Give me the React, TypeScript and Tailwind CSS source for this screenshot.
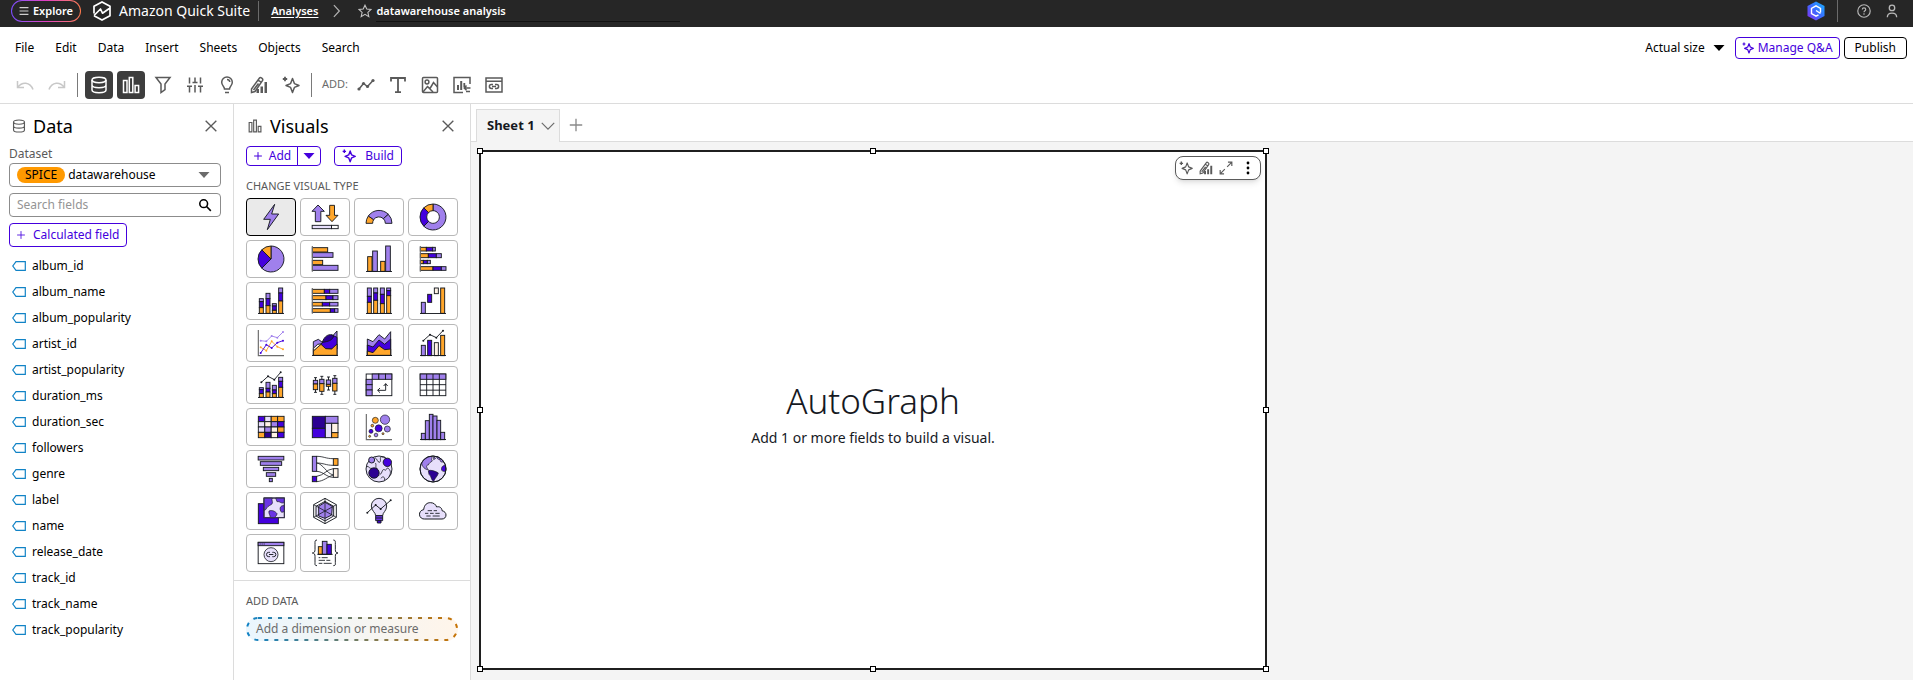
import type { ReactNode } from "react";

const P = "#a080ec";
const D = "#4400dd";
const K = "#2c0092";
const O = "#ffa62b";
const L = "#e7dffb";
const C = "#fff3e6";
const W = "#ffffff";
const INK = "#16191f";
const AXIS = "#6b6b6b";

type Bar = [number, number, number, number, string];

/* ---------- visual type glyphs, drawn on an 84 unit grid ---------- */

function Glyph({ children }: { children: ReactNode }) {
  return (
    <svg
      viewBox="0 0 84 84"
      className="size-7 shrink-0"
      fill="none"
      stroke={INK}
      strokeWidth="2.8"
      aria-hidden="true"
    >
      {children}
    </svg>
  );
}

function Bars({ items }: { items: Bar[] }) {
  return (
    <>
      {items.map(([x, y, w, h, c], i) => (
        <rect key={i} x={x} y={y} width={w} height={h} fill={c} />
      ))}
    </>
  );
}

function Stack({ x, w, stops, colors }: { x: number; w: number; stops: number[]; colors: string[] }) {
  return <Bars items={colors.map((c, i): Bar => [x, stops[i], w, stops[i + 1] - stops[i], c])} />;
}

function Row({ y, h, stops }: { y: number; h: number; stops: number[] }) {
  const colors = [O, D, P];
  return <Bars items={colors.map((c, i): Bar => [stops[i], y, stops[i + 1] - stops[i], h, c])} />;
}

function Trend({ pts, color }: { pts: [number, number][]; color: string }) {
  return (
    <g stroke={color}>
      <polyline points={pts.map((p) => p.join(",")).join(" ")} />
      {pts.map(([x, y]) => (
        <circle key={x} cx={x} cy={y} r="3" fill={color} stroke="none" />
      ))}
    </g>
  );
}

function BoxPlot({ x, t, a, m, b, e }: { x: number; t: number; a: number; m: number; b: number; e: number }) {
  return (
    <>
      <path d={`M${x + 6.5} ${t}V${e}M${x + 2} ${t}h9M${x + 2} ${e}h9`} />
      <Bars items={[[x, a, 13, m - a, P], [x, m, 13, b - m, O]]} />
    </>
  );
}

const baseline = <path d="M3 79.5H81" stroke={INK} />;
const heat = [
  [D, L, O, O],
  [L, C, P, D],
  [L, P, C, O],
  [O, K, C, D],
];

const visualTypes: { name: string; art: ReactNode }[] = [
  {
    name: "AutoGraph",
    art: <path d="M53 4L20 49H40L31 80L65 33H44Z" fill={P} strokeLinejoin="round" />,
  },
  {
    name: "KPI",
    art: (
      <>
        <path d="M21 6L40 25H29.5V56H13V25H3Z" fill={P} />
        <path d="M56 7H70.5V37H81L63 56L45 37H56Z" fill={O} />
        <Bars items={[[3.5, 67, 58, 10, L], [61.5, 67, 20, 10, W]]} />
      </>
    ),
  },
  {
    name: "Gauge",
    art: (
      <>
        <path d="M3 61A39 39 0 0 1 10 39L26 50A19 19 0 0 0 23 61Z" fill={O} />
        <path d="M10 39A39 39 0 0 1 70 34L55 47A19 19 0 0 0 26 50Z" fill={P} />
        <path d="M70 34A39 39 0 0 1 81 61H61A19 19 0 0 0 55 47Z" fill={P} />
      </>
    ),
  },
  {
    name: "Donut chart",
    art: (
      <>
        <path d="M42 3A39 39 0 1 1 14.4 69.6L28.6 55.4A19 19 0 1 0 42 23Z" fill={P} />
        <path d="M14.4 69.6A39 39 0 0 1 14.4 14.4L28.6 28.6A19 19 0 0 0 28.6 55.4Z" fill={D} />
        <path d="M14.4 14.4A39 39 0 0 1 42 3V23A19 19 0 0 0 28.6 28.6Z" fill={O} />
      </>
    ),
  },
  {
    name: "Pie chart",
    art: (
      <>
        <path d="M42 42V3A39 39 0 1 1 14.4 69.6Z" fill={P} />
        <path d="M42 42L14.4 69.6A39 39 0 0 1 14.4 14.4Z" fill={D} />
        <path d="M42 42L14.4 14.4A39 39 0 0 1 42 3Z" fill={O} />
      </>
    ),
  },
  {
    name: "Horizontal bar chart",
    art: (
      <>
        <Bars items={[[4, 8, 46, 13, O], [4, 23, 62, 14, P], [4, 46, 31, 13, O], [4, 61, 77, 15, P]]} />
        <path d="M4 3V80" stroke={AXIS} strokeWidth="3.5" />
      </>
    ),
  },
  {
    name: "Vertical bar chart",
    art: (
      <>
        <Bars items={[[8, 35, 13, 44, O], [23, 18, 14, 61, P], [47, 49, 13, 30, O], [62, 3, 14, 76, P]]} />
        {baseline}
      </>
    ),
  },
  {
    name: "Horizontal stacked bar chart",
    art: (
      <>
        <Row y={7} h={11} stops={[4, 22, 41, 49]} />
        <Row y={26} h={12} stops={[4, 28, 52, 67]} />
        <Row y={46} h={10} stops={[4, 13, 25, 34]} />
        <Row y={65} h={11} stops={[4, 42, 67, 81]} />
        <path d="M4 3V80" stroke={AXIS} strokeWidth="3.5" />
      </>
    ),
  },
  {
    name: "Vertical stacked bar chart",
    art: (
      <>
        <Stack x={7} w={12} stops={[35, 44, 62, 79]} colors={[P, D, O]} />
        <Stack x={27} w={12} stops={[19, 35, 56, 79]} colors={[P, D, O]} />
        <Stack x={46} w={12} stops={[50, 57, 70, 79]} colors={[P, D, O]} />
        <Stack x={65} w={12} stops={[3, 18, 42, 79]} colors={[P, D, O]} />
        {baseline}
      </>
    ),
  },
  {
    name: "Horizontal 100% stacked bar chart",
    art: (
      <>
        <Row y={7} h={12} stops={[4, 40, 56, 81]} />
        <Row y={26} h={12} stops={[4, 45, 66, 81]} />
        <Row y={46} h={11} stops={[4, 34, 56, 81]} />
        <Row y={65} h={11} stops={[4, 58, 71, 81]} />
        <path d="M4 3V80" stroke={AXIS} strokeWidth="3.5" />
      </>
    ),
  },
  {
    name: "Vertical 100% stacked bar chart",
    art: (
      <>
        <Stack x={7} w={12} stops={[3, 28, 46, 79]} colors={[P, D, O]} />
        <Stack x={26} w={12} stops={[3, 18, 40, 79]} colors={[P, D, O]} />
        <Stack x={46} w={12} stops={[3, 22, 50, 79]} colors={[P, D, O]} />
        <Stack x={65} w={12} stops={[3, 11, 26, 79]} colors={[P, D, O]} />
        {baseline}
      </>
    ),
  },
  {
    name: "Waterfall chart",
    art: (
      <>
        <Bars items={[[7, 46, 12, 33, P], [26, 22, 12, 24, D], [46, 3, 12, 17, C], [65, 3, 12, 76, O]]} />
        {baseline}
      </>
    ),
  },
  {
    name: "Line chart",
    art: (
      <>
        <path d="M4 3V80H81" stroke={AXIS} strokeWidth="3.5" />
        <Trend color={P} pts={[[11, 35], [28, 37], [44, 21], [61, 26], [78, 9]]} />
        <Trend color={O} pts={[[11, 55], [28, 65], [44, 37], [61, 53], [78, 61]]} />
        <Trend color={D} pts={[[11, 72], [28, 47], [44, 57], [61, 41], [78, 35]]} />
      </>
    ),
  },
  {
    name: "Area chart",
    art: (
      <>
        <path d="M7 38L22 31L34 40L62 24L78 6V79H7Z" fill={P} />
        <path d="M7 58L20 46L34 44L26 56L7 66Z" fill={C} />
        <path d="M30 46L44 28L62 18L78 25V60H30Z" fill={D} />
        <path d="M34 40C40 20 56 12 68 20C66 34 50 38 34 40Z" fill={K} />
        <path d="M7 66L30 46L44 59L62 60L78 45V79H7Z" fill={O} />
        {baseline}
      </>
    ),
  },
  {
    name: "Stacked area chart",
    art: (
      <>
        <path d="M7 30L24 38L42 17L59 30L77 8V79H7Z" fill={P} />
        <path d="M7 48L24 54L42 33L59 46L77 30V79H7Z" fill={D} />
        <path d="M7 66L24 71L42 50L59 62L77 60V79H7Z" fill={O} />
        {baseline}
      </>
    ),
  },
  {
    name: "Clustered bar combo chart",
    art: (
      <>
        <Bars items={[[7, 49, 12, 31, P], [26, 34, 12, 46, D], [46, 41, 12, 39, C], [65, 19, 12, 61, O]]} />
        {baseline}
        <Trend color={INK} pts={[[13, 35], [33, 17], [52, 26], [72, 5]]} />
      </>
    ),
  },
  {
    name: "Stacked bar combo chart",
    art: (
      <>
        <Stack x={7} w={12} stops={[50, 56, 68, 79]} colors={[P, D, O]} />
        <Stack x={27} w={12} stops={[34, 52, 63, 79]} colors={[P, D, O]} />
        <Stack x={46} w={12} stops={[43, 57, 68, 79]} colors={[P, D, O]} />
        <Stack x={65} w={12} stops={[19, 31, 49, 79]} colors={[P, D, O]} />
        {baseline}
        <Trend color={INK} pts={[[13, 34], [33, 16], [52, 26], [71, 4]]} />
      </>
    ),
  },
  {
    name: "Box plot",
    art: (
      <>
        <BoxPlot x={7} t={20} a={28} m={39} b={56} e={64} />
        <BoxPlot x={26} t={16} a={25} m={38} b={61} e={70} />
        <BoxPlot x={46} t={18} a={27} m={40} b={46} e={57} />
        <BoxPlot x={65} t={14} a={22} m={37} b={60} e={70} />
      </>
    ),
  },
  {
    name: "Pivot table",
    art: (
      <>
        <rect x="3.5" y="9" width="77" height="65" fill={W} />
        <Bars
          items={[
            [21.5, 9, 20, 16, P],
            [41.5, 9, 20, 16, P],
            [61.5, 9, 19, 16, P],
            [3.5, 25, 18, 16, P],
            [3.5, 41, 18, 16, P],
            [3.5, 57, 18, 17, P],
          ]}
        />
        <path d="M62 38V58H38M56 45L62 38L68 45M45 51L38 58L45 65" />
      </>
    ),
  },
  {
    name: "Table",
    art: (
      <>
        <rect x="3.5" y="9" width="77" height="65" fill={W} />
        <rect x="3.5" y="9" width="77" height="16" fill={P} />
        <path d="M23 9V74M42 9V74M61 9V74M3 41H81M3 57.5H81" />
      </>
    ),
  },
  {
    name: "Heat map",
    art: <Bars items={heat.flatMap((r, y) => r.map((c, x): Bar => [4 + x * 19.3, 10 + y * 16, 19.3, 16, c]))} />,
  },
  {
    name: "Tree map",
    art: (
      <Bars
        items={[
          [4, 10, 39, 36, K],
          [4, 46, 39, 28, D],
          [43, 10, 38, 21, P],
          [43, 31, 19, 43, L],
          [62, 31, 19, 28, C],
          [62, 59, 19, 15, O],
        ]}
      />
    ),
  },
  {
    name: "Scatter plot",
    art: (
      <>
        <path d="M4 3V80H81" stroke={AXIS} strokeWidth="3.5" />
        <g strokeWidth="2">
          <circle cx="31" cy="22" r="9" fill={O} />
          <circle cx="60" cy="20" r="14" fill={P} />
          <circle cx="41" cy="46" r="10.5" fill={D} />
          <circle cx="67" cy="48" r="9" fill={P} />
          <circle cx="18" cy="55" r="6" fill={D} />
          <circle cx="33" cy="66" r="5.5" fill={P} />
          <circle cx="54" cy="62" r="3" fill={O} />
          <circle cx="14" cy="70" r="3" fill={O} />
          <circle cx="22" cy="38" r="4" fill={O} />
        </g>
      </>
    ),
  },
  {
    name: "Histogram",
    art: (
      <>
        <Bars
          items={[
            [7, 61, 12, 19, P],
            [19, 23, 12, 57, P],
            [31, 4, 11, 76, P],
            [42, 9, 12, 71, P],
            [54, 22, 11, 58, P],
            [65, 58, 12, 22, P],
          ]}
        />
        {baseline}
      </>
    ),
  },
  {
    name: "Funnel chart",
    art: (
      <Bars
        items={[
          [3.5, 4, 77, 11, P],
          [10, 20, 64, 11, P],
          [19, 37, 46, 10, P],
          [28, 53, 28, 11, P],
          [37, 70, 9, 10, P],
        ]}
      />
    ),
  },
  {
    name: "Sankey diagram",
    art: (
      <>
        <Bars items={[[4, 4, 13, 45, P], [4, 64, 13, 16, D], [67, 11, 14, 20, O], [67, 41, 14, 26, C]]} />
        <path
          d="M17 4C38 4 44 11 67 11M17 24C38 24 44 31 67 31M17 24C36 26 46 55 67 60M17 49C38 50 46 67 67 67M17 64C38 62 46 43 67 41M17 80C40 78 48 66 67 60"
          strokeWidth="2.4"
        />
      </>
    ),
  },
  {
    name: "Points on map",
    art: (
      <>
        <circle cx="42" cy="42" r="39" fill={L} />
        <path
          d="M30 8C40 14 34 20 44 22C50 16 42 8 50 5M31 24C36 30 28 38 38 42M44 60C54 52 50 42 58 44C66 50 62 36 70 40C78 48 78 56 72 64M48 70C52 62 62 66 58 76M5 34C14 34 12 42 22 40M60 12C64 4 54 8 50 5"
          strokeWidth="2.4"
        />
        <circle cx="20" cy="15" r="9" fill={P} />
        <circle cx="67" cy="22" r="12.5" fill={D} />
        <circle cx="27" cy="54" r="15.5" fill={K} />
      </>
    ),
  },
  {
    name: "Filled map",
    art: (
      <>
        <circle cx="42" cy="42" r="39" fill={L} />
        <path d="M8 24C14 10 26 4 38 4C42 10 34 12 40 18C34 22 30 24 28 30C20 30 22 38 28 44C18 44 10 36 8 24Z" fill={P} strokeWidth="2" />
        <path d="M54 5C62 8 70 14 74 20C66 24 62 18 64 14C58 14 52 10 54 5ZM44 6L50 10L44 14Z" fill={P} strokeWidth="2" />
        <path d="M28 47C36 44 48 48 58 54C56 64 48 68 44 79C36 76 38 64 30 58Z" fill={K} strokeWidth="2" />
        <path d="M80 32C70 30 66 38 68 46C72 50 78 50 80 48Z" fill={D} strokeWidth="2" />
        <circle cx="42" cy="42" r="39" />
      </>
    ),
  },
  {
    name: "Layer map",
    art: (
      <>
        <rect x="4" y="20" width="60" height="60" fill={D} />
        <rect x="21" y="3" width="61" height="59" fill={L} />
        <path d="M21 3H46C42 10 50 16 44 22C36 26 30 30 26 38L21 40Z" fill="#6b35e4" strokeWidth="2" />
        <path
          d="M56 3H82V16C72 22 70 12 60 14ZM82 26C68 24 66 38 74 46L82 44ZM36 42C46 38 56 44 60 50C60 56 54 58 54 62H40C40 54 34 50 36 42Z"
          fill="#6b35e4"
          strokeWidth="2"
        />
        <rect x="21" y="3" width="61" height="59" stroke="#3d3852" />
      </>
    ),
  },
  {
    name: "Radar chart",
    art: (
      <>
        <path d="M42 4L76 23V61L42 80L8 61V23Z" fill={W} />
        <path d="M42 13L68 28V57L42 72L15 57V28Z" fill={L} />
        <path d="M42 16L64 28L62 54L42 64L23 57L23 28Z" fill={P} />
        <path d="M42 4V80M8 23L76 61M76 23L8 61" strokeWidth="2.4" />
      </>
    ),
  },
  {
    name: "Insight",
    art: (
      <>
        <path d="M32 56C32 46 19 42 19 27A23 23 0 0 1 65 27C65 42 53 46 53 56Z" fill={L} />
        <path d="M32 56H53V71H32Z" fill="#6b35e4" />
        <path d="M32 63H53M37 76H48" />
        <path d="M37 71H48V78H37Z" fill={D} />
        <Trend color={INK} pts={[[7, 47], [32, 24], [47, 36], [77, 10]]} />
      </>
    ),
  },
  {
    name: "Word cloud",
    art: (
      <>
        <path
          d="M17 66A14 14 0 0 1 14 38C16 22 25 17 34 17C44 17 50 22 53 30C62 27 69 33 69 41C77 43 81 48 81 54C81 61 76 66 69 66Z"
          fill={L}
          strokeWidth="3"
        />
        <path d="M26 41H39M44 41H54M18 49H28M33 49H44M49 49H62M22 57H35M41 57H62" stroke={INK} strokeWidth="2.6" />
      </>
    ),
  },
  {
    name: "Custom visual content",
    art: (
      <>
        <rect x="3.5" y="10" width="77" height="64" fill={W} />
        <rect x="3.5" y="10" width="77" height="10" fill={P} />
        <path d="M8 15H11M14 15H17M20 15H23" />
        <circle cx="42" cy="47" r="21" fill={L} strokeWidth="2.4" />
        <path d="M39 40H35A6.5 6.5 0 0 0 35 53H39M46 40H50A6.5 6.5 0 0 1 50 53H46M36 46.5H49" />
      </>
    ),
  },
  {
    name: "Highcharts visual",
    art: (
      <>
        <path d="M18 3C11 3 12 8 12 16V32C12 38 10 42 4 42C10 42 12 46 12 52V70C12 77 11 80 18 80M67 3C74 3 73 8 73 16V32C73 38 75 42 81 42C75 42 73 46 73 52V70C73 77 74 80 67 80" />
        <Bars items={[[22, 23, 12, 23, O], [34, 7, 14, 39, P], [48, 16, 13, 30, D]]} />
        <path d="M19 46H65" />
        <path d="M23 56H28M32 56H50M23 64H42M46 64H58M23 73H34M38 73H62" strokeWidth="2.6" />
      </>
    ),
  },
];

/* ---------- interface icons ---------- */

type IconProps = { className?: string; sw?: number };

function Icon({ className = "size-4", sw = 1.5, children }: IconProps & { children: ReactNode }) {
  return (
    <svg viewBox="0 0 18 18" className={`shrink-0 ${className}`} fill="none" stroke="currentColor" strokeWidth={sw} aria-hidden="true">
      {children}
    </svg>
  );
}

const DatabaseIcon = (p: IconProps) => (
  <Icon {...p}>
    <ellipse cx="9" cy="4" rx="7" ry="2.7" />
    <path d="M2 4V14C2 15.5 5 16.7 9 16.7S16 15.5 16 14V4M2 9C2 10.5 5 11.7 9 11.7S16 10.5 16 9" />
  </Icon>
);
const ChartIcon = (p: IconProps) => (
  <Icon {...p}>
    <path d="M1.5 4.5H5V16.5H1.5ZM7.3 1.5H10.8V16.5H7.3ZM13.1 9.5H16.6V16.5H13.1Z" />
  </Icon>
);
const UndoIcon = (p: IconProps) => (
  <Icon {...p}>
    <path d="M1.5 5V11.5H8M1.8 11.2C6 5.5 14 5.5 17 13.5" />
  </Icon>
);
const RedoIcon = (p: IconProps) => (
  <Icon {...p}>
    <path d="M16.5 5V11.5H10M16.2 11.2C12 5.5 4 5.5 1 13.5" />
  </Icon>
);
const FilterIcon = (p: IconProps) => (
  <Icon {...p}>
    <path d="M2 1.5H16L11 8V13.5L7 16.5V8Z" />
  </Icon>
);
const SlidersIcon = (p: IconProps) => (
  <Icon {...p}>
    <path d="M3.5 1.5V7.5M1 10.3H6M3.5 10.3V16.5M9 1.5V6.5M6.5 6.5H11.5M9 9V16.5M14.5 1.5V7.5M12 10.3H17M14.5 10.3V16.5" />
  </Icon>
);
const BulbIcon = (p: IconProps) => (
  <Icon {...p}>
    <path d="M6.5 13C6.5 10.5 3.7 9.5 3.7 6.2A5.3 5.3 0 0 1 14.3 6.2C14.3 9.5 11.5 10.5 11.5 13ZM7 16.5H11M9 3.4C10.6 3.4 11.6 4.4 11.8 6" />
  </Icon>
);
const PencilChartIcon = (p: IconProps) => (
  <Icon {...p}>
    <path d="M1.5 13L9.5 2C10.5 0.8 13.5 2.8 12.6 4.4L5 15.5L1.5 16.5ZM8 4L11 6.2M3.5 14L8.5 7.5" />
    <path d="M6.5 13H9V17H6.5ZM10.5 10.5H13V17H10.5ZM14.5 6H17V17H14.5Z" fill="currentColor" stroke="none" />
  </Icon>
);
const SparkleIcon = (p: IconProps) => (
  <Icon {...p}>
    <path d="M10.5 2.5L12.4 7.6L17 9.5L12.4 11.4L10.5 16.5L8.6 11.4L4 9.5L8.6 7.6Z" strokeLinejoin="round" />
    <path d="M3 0.8V5.2M0.8 3H5.2" strokeWidth="1.8" />
  </Icon>
);
const LineIcon = (p: IconProps) => (
  <Icon {...p}>
    <path d="M2 13L6.5 7.5L10.5 10.5L16 4.5" />
    <g fill="currentColor" stroke="none">
      <circle cx="2" cy="13" r="1.6" />
      <circle cx="6.5" cy="7.5" r="1.6" />
      <circle cx="10.5" cy="10.5" r="1.6" />
      <circle cx="16" cy="4.5" r="1.6" />
    </g>
  </Icon>
);
const TextIcon = (p: IconProps) => (
  <Icon {...p}>
    <path d="M2 5.5V2H16V5.5M9 2V16M6 16.2H12" strokeWidth="1.8" />
  </Icon>
);
const ImageIcon = (p: IconProps) => (
  <Icon {...p}>
    <rect x="1.5" y="1.5" width="15" height="15" rx="1" />
    <circle cx="6" cy="6" r="1.9" />
    <path d="M2 16L6.5 10.5L9 12.5L12.5 6.5L16.5 11M6.5 10.5L12 16" />
  </Icon>
);
const InsertVisualIcon = (p: IconProps) => (
  <Icon {...p}>
    <path d="M10 16.5H1V1.5H17V8" />
    <path d="M4 9H6V14H4ZM7.2 5H9.2V14H7.2ZM10.4 7H12.2V11H10.4Z" fill="currentColor" stroke="none" />
    <path d="M17.5 12H11.5M13.5 9.5L11.2 12L13.5 14.3M17 15.5H13" />
  </Icon>
);
const EmbedIcon = (p: IconProps) => (
  <Icon {...p}>
    <path d="M1 2H17V16H1ZM1 5.2H17M8 8.6H6.3A1.9 1.9 0 0 0 6.3 12.4H8M10 8.6H11.7A1.9 1.9 0 0 1 11.7 12.4H10M7 10.5H11" />
  </Icon>
);
const CloseIcon = (p: IconProps) => (
  <Icon {...p}>
    <path d="M3 3L15 15M15 3L3 15" />
  </Icon>
);
const PlusIcon = (p: IconProps) => (
  <Icon {...p}>
    <path d="M9 2V16M2 9H16" />
  </Icon>
);
const CaretIcon = ({ className = "" }: { className?: string }) => (
  <svg viewBox="0 0 12 6" className={`h-1.5 w-3 shrink-0 ${className}`} fill="currentColor" aria-hidden="true">
    <path d="M0.5 0H11.5L6 6Z" />
  </svg>
);
const SearchIcon = (p: IconProps) => (
  <Icon {...p}>
    <circle cx="7.3" cy="7.3" r="5" />
    <path d="M11 11L16.5 16.5" />
  </Icon>
);
const FieldIcon = () => (
  <svg viewBox="0 0 14 10" className="h-2.5 w-3.5 shrink-0 text-[#1183c6]" fill="none" stroke="currentColor" strokeWidth="1.2" aria-hidden="true">
    <path d="M4 0.7H13.3V9.3H4L0.8 5Z" />
  </svg>
);
const ExpandIcon = (p: IconProps) => (
  <Icon {...p}>
    <path d="M10.5 7.5L16.5 1.5M11.5 1.5H16.5V6.5M7.5 10.5L1.5 16.5M1.5 11.5V16.5H6.5" />
  </Icon>
);

/* ---------- page parts ---------- */

function TopBar() {
  return (
    <header className="flex h-[27px] items-start bg-[#262626] text-white">
      <div className="flex h-[22px] min-w-0 flex-1 items-center pl-[11px]">
        <button className="h-[22px] w-[70px] rounded-full bg-linear-to-r from-[#7b4bff] via-[#e23cc0] to-[#ff7a4a] p-px">
          <span className="flex h-5 items-center justify-center gap-1 rounded-full bg-[#262626] text-[11px] font-semibold">
            <Icon className="size-2.5 text-[#d0d0d0]" sw={2}>
              <path d="M1 3H17M1 9H17M1 15H17" />
            </Icon>
            Explore
          </span>
        </button>
        <svg viewBox="0 0 18 20" className="ml-3 h-5 w-[18px]" fill="none" stroke="#fff" strokeWidth="1.7" aria-hidden="true">
          <path d="M1 12.5V5.3L9 0.9L17 5.3V14.7L9 19.1L1 14.7M1 14.5L7.5 8L9.5 12.2L17 7" strokeLinejoin="round" />
        </svg>
        <span className="ml-2 text-sm leading-5 whitespace-nowrap">Amazon Quick Suite</span>
        <span className="ml-2 h-5 w-px bg-[#6b6b6b]" />
        <nav className="ml-3 flex items-center text-[11px] font-semibold whitespace-nowrap">
          <a href="#analyses" className="underline underline-offset-2">
            Analyses
          </a>
          <Icon className="ml-3 size-3.5 text-[#b0b0b0]" sw={1.6}>
            <path d="M5 1.5L12 9L5 16.5" />
          </Icon>
          <Icon className="ml-3.5 size-3.5 text-[#c4c4c4]" sw={1.4}>
            <path d="M9 1.5L11.3 6.5L16.8 7L12.7 10.7L13.9 16.2L9 13.3L4.1 16.2L5.3 10.7L1.2 7L6.7 6.5Z" />
          </Icon>
          <span className="ml-1 h-[22px] w-[304px] border-b border-[#111] leading-[22px]">datawarehouse analysis</span>
        </nav>
      </div>
      <div className="flex h-[22px] items-center pr-3.5 text-[#b8b8b8]">
        <button aria-label="Assistant">
          <svg viewBox="0 0 18 20" className="h-5 w-[18px]" aria-hidden="true">
            <defs>
              <linearGradient id="hex" x1="1" y1="0" x2="0" y2="1">
                <stop offset="0" stopColor="#16b5ff" />
                <stop offset="0.5" stopColor="#3a6bff" />
                <stop offset="1" stopColor="#8a2cf0" />
              </linearGradient>
            </defs>
            <path d="M9 0.5L17.5 5V15L9 19.5L0.5 15V5Z" fill="url(#hex)" />
            <path d="M13.5 11.5V7.3L9 4.8L4.5 7.3V12.7L9 15.2L11.5 13.8M9 9.5L13.5 12.5" fill="none" stroke="#fff" strokeWidth="1.4" />
          </svg>
        </button>
        <span className="ml-3 h-[22px] w-px bg-[#6b6b6b]" />
        <button aria-label="Help" className="ml-[19px]">
          <Icon className="size-3.5" sw={1.5}>
            <circle cx="9" cy="9" r="8" />
            <path d="M6.8 7C6.8 4.3 11.2 4.3 11.2 7C11.2 8.7 9 8.7 9 10.6M9 12V13.8" />
          </Icon>
        </button>
        <button aria-label="Account" className="ml-3.5">
          <Icon className="size-3.5" sw={1.7}>
            <circle cx="9" cy="5" r="3.5" />
            <path d="M3 17C3 10 15 10 15 17" />
          </Icon>
        </button>
      </div>
    </header>
  );
}

function MenuBar() {
  return (
    <div className="flex h-[41px] items-center justify-between pr-1.5 pl-[15px] text-xs text-black">
      <nav className="flex gap-[21px]">
        {["File", "Edit", "Data", "Insert", "Sheets", "Objects", "Search"].map((m) => (
          <button key={m}>{m}</button>
        ))}
      </nav>
      <div className="flex items-center">
        <button className="mr-2.5 flex items-center gap-2">
          Actual size
          <CaretIcon />
        </button>
        <button className="flex h-[22px] items-center gap-1 rounded border border-[#4400dd] px-1.5 text-[#4400dd]">
          <SparkleIcon className="size-3" sw={1.8} />
          Manage Q&amp;A
        </button>
        <button className="ml-1 h-[22px] rounded border border-black px-2.5">Publish</button>
      </div>
    </div>
  );
}

const toolButtons: { label: string; icon: ReactNode; active?: boolean }[] = [
  { label: "Data", icon: <DatabaseIcon className="size-[18px]" />, active: true },
  { label: "Visuals", icon: <ChartIcon className="size-[18px]" />, active: true },
  { label: "Filter", icon: <FilterIcon className="size-[18px]" /> },
  { label: "Parameters", icon: <SlidersIcon className="size-[18px]" /> },
  { label: "Insights", icon: <BulbIcon className="size-[18px]" /> },
  { label: "Properties", icon: <PencilChartIcon className="size-[18px]" /> },
  { label: "Generate", icon: <SparkleIcon className="size-[18px]" /> },
];

const addButtons: { label: string; icon: ReactNode }[] = [
  { label: "Add visual", icon: <LineIcon className="size-[18px]" /> },
  { label: "Add text", icon: <TextIcon className="size-[18px]" /> },
  { label: "Add image", icon: <ImageIcon className="size-[18px]" /> },
  { label: "Insert visual", icon: <InsertVisualIcon className="size-[18px]" /> },
  { label: "Embed content", icon: <EmbedIcon className="size-[18px]" /> },
];

function Toolbar() {
  const cell = "flex size-7 items-center justify-center rounded";
  return (
    <div className="flex h-9 items-center gap-1 border-b border-[#dcdcdc] pb-0.5 pl-[11px] text-[#5a5a5a]">
      <button aria-label="Undo" className={`${cell} text-[#c8c8c8]`}>
        <UndoIcon className="size-[18px]" />
      </button>
      <button aria-label="Redo" className={`${cell} text-[#c8c8c8]`}>
        <RedoIcon className="size-[18px]" />
      </button>
      <span className="mx-0.5 h-6 w-px bg-[#7a7a7a]" />
      <div className="flex gap-1 pl-px">
        {toolButtons.map((t) => (
          <button key={t.label} aria-label={t.label} className={t.active ? `${cell} bg-[#3d3d3d] text-white` : cell}>
            {t.icon}
          </button>
        ))}
      </div>
      <span className="mx-0.5 h-6 w-px bg-[#7a7a7a]" />
      <span className="w-[30px] pl-1 text-[11px] text-[#6b6b6b]">ADD:</span>
      {addButtons.map((t) => (
        <button key={t.label} aria-label={t.label} className={cell}>
          {t.icon}
        </button>
      ))}
    </div>
  );
}

const fields = [
  "album_id",
  "album_name",
  "album_popularity",
  "artist_id",
  "artist_popularity",
  "duration_ms",
  "duration_sec",
  "followers",
  "genre",
  "label",
  "name",
  "release_date",
  "track_id",
  "track_name",
  "track_popularity",
];

function DataPanel() {
  return (
    <aside className="w-[234px] shrink-0 border-r border-[#dcdcdc] px-2 pt-[7px] text-xs text-black">
      <div className="flex h-[30px] items-center pl-1">
        <DatabaseIcon className="size-3.5 text-[#5a5a5a]" />
        <h2 className="ml-[7px] flex-1 text-lg leading-6">Data</h2>
        <button aria-label="Close data panel" className="mr-1.5 text-[#5a5a5a]">
          <CloseIcon />
        </button>
      </div>
      <label htmlFor="dataset" className="mt-1 block pl-px leading-[18px] text-[#5a5a5a]">
        Dataset
      </label>
      <div className="mr-1 ml-px flex h-6 items-center rounded border border-[#8c8c8c] pr-2.5 pl-[7px]">
        <span className="flex h-4 items-center rounded-full bg-[#ff9900] px-2 text-xs">SPICE</span>
        <select id="dataset" className="min-w-0 flex-1 appearance-none bg-transparent pl-[3px] text-xs outline-none">
          <option>datawarehouse</option>
        </select>
        <CaretIcon className="text-[#6b6b6b]" />
      </div>
      <div className="mt-1.5 mr-1 ml-px flex h-6 items-center rounded border border-[#8c8c8c] pr-2 pl-[7px]">
        <input
          aria-label="Search fields"
          placeholder="Search fields"
          className="min-w-0 flex-1 bg-transparent text-xs outline-none placeholder:text-[#949494]"
        />
        <SearchIcon className="size-3.5" sw={2} />
      </div>
      <button className="mt-1.5 ml-px flex h-6 items-center gap-[7px] rounded border border-[#4400dd] px-1.5 text-[#4400dd]">
        <PlusIcon className="size-2.5" />
        Calculated field
      </button>
      <ul className="mt-1.5">
        {fields.map((f) => (
          <li key={f} className="flex h-[26px] items-center gap-1.5 pl-1">
            <FieldIcon />
            {f}
          </li>
        ))}
      </ul>
    </aside>
  );
}

function VisualsPanel() {
  return (
    <aside className="w-[237px] shrink-0 border-r border-[#dcdcdc] pt-[7px] text-xs">
      <div className="px-3">
        <div className="flex h-[30px] items-center pl-0.5">
          <ChartIcon className="size-3.5 text-[#5a5a5a]" />
          <h2 className="ml-2 flex-1 text-lg leading-6 text-black">Visuals</h2>
          <button aria-label="Close visuals panel" className="mr-0.5 text-[#5a5a5a]">
            <CloseIcon />
          </button>
        </div>
        <div className="mt-[5px] flex text-[#4400dd]">
          <button className="flex h-5 w-[52px] items-center justify-center gap-1.5 rounded-l border border-[#4400dd]">
            <PlusIcon className="size-2.5" sw={1.8} />
            Add
          </button>
          <button aria-label="More add options" className="-ml-px flex h-5 w-6 items-center justify-center rounded-r border border-[#4400dd]">
            <CaretIcon />
          </button>
          <button className="ml-[13px] flex h-5 w-[68px] items-center justify-between rounded border border-[#4400dd] px-[7px]">
            <SparkleIcon className="size-3.5" sw={1.8} />
            Build
          </button>
        </div>
        <h3 className="mt-3 text-[11px] leading-4 text-[#5a5a5a]">CHANGE VISUAL TYPE</h3>
        <div className="mt-1 grid grid-cols-4 gap-1">
          {visualTypes.map((v, i) => (
            <button
              key={v.name}
              aria-label={v.name}
              className={
                i === 0
                  ? "flex h-[38px] items-center justify-center rounded border border-black bg-[#eaeaea]"
                  : "flex h-[38px] items-center justify-center rounded border border-[#b8b8b8] bg-white"
              }
            >
              <Glyph>{v.art}</Glyph>
            </button>
          ))}
        </div>
      </div>
      <div className="mt-2 border-t border-[#dcdcdc] px-3 pt-3">
        <h3 className="text-[11px] leading-4 text-[#5a5a5a]">ADD DATA</h3>
        <div className="relative mt-2 flex h-6 items-center rounded-full bg-linear-to-r from-[#eaf6fe] to-[#fff5ea] pl-2.5 text-[#6b6b6b]">
          <svg className="absolute inset-0 size-full overflow-visible" fill="none" aria-hidden="true">
            <defs>
              <linearGradient id="drop" gradientUnits="userSpaceOnUse" x1="0" y1="0" x2="212" y2="0">
                <stop offset="0" stopColor="#1183c6" />
                <stop offset="1" stopColor="#c87405" />
              </linearGradient>
            </defs>
            <rect x="1" y="1" width="210" height="22" rx="11" stroke="url(#drop)" strokeWidth="2" strokeDasharray="4 6" />
          </svg>
          Add a dimension or measure
        </div>
      </div>
    </aside>
  );
}

const handles = [
  "-left-1 -top-1",
  "left-1/2 -ml-[3px] -top-1",
  "-right-1 -top-1",
  "-left-1 top-1/2 -mt-[3px]",
  "-right-1 top-1/2 -mt-[3px]",
  "-left-1 -bottom-1",
  "left-1/2 -ml-[3px] -bottom-1",
  "-right-1 -bottom-1",
];

function Canvas() {
  return (
    <main className="flex min-w-0 flex-1 flex-col bg-[#f4f4f4]">
      <div className="flex h-[38px] items-end border-b border-[#dcdcdc] bg-white pl-[5px]">
        <button className="-mb-px flex h-[33px] items-center gap-1.5 border border-b-0 border-[#dcdcdc] bg-[#f4f4f4] pr-1 pl-2.5 text-[13px] font-bold text-[#16191f]">
          Sheet 1
          <Icon className="size-3.5 text-[#6b6b6b]" sw={1.5}>
            <path d="M1 5L9 13L17 5" />
          </Icon>
        </button>
        <button aria-label="Add sheet" className="flex h-8 items-center pl-2 text-[#8a8a8a]">
          <PlusIcon className="size-4" sw={1.5} />
        </button>
      </div>
      <div className="pt-2 pb-2 pl-2">
        <section className="relative flex h-[520px] w-[788px] flex-col items-center justify-center border-2 border-[#1f1f1f] bg-white pt-1.5 text-[#16191f]">
          <h1 className="text-[35px] leading-[46px] font-light">AutoGraph</h1>
          <p className="mt-1 text-sm leading-5">Add 1 or more fields to build a visual.</p>
          <div className="absolute top-1 right-1 flex h-6 w-[86px] items-center rounded-lg border border-[#5a5a5a] bg-white pl-[3px] text-[#5a5a5a] shadow-md">
            <button aria-label="Generate">
              <SparkleIcon className="size-3.5" />
            </button>
            <button aria-label="Format visual" className="ml-1.5">
              <PencilChartIcon className="size-3.5" />
            </button>
            <button aria-label="Expand" className="ml-1.5">
              <ExpandIcon className="size-3.5" />
            </button>
            <button aria-label="More options" className="ml-2 text-black">
              <svg viewBox="0 0 14 14" className="size-3.5" fill="currentColor" aria-hidden="true">
                <circle cx="7" cy="2" r="1.4" />
                <circle cx="7" cy="7" r="1.4" />
                <circle cx="7" cy="12" r="1.4" />
              </svg>
            </button>
          </div>
          {handles.map((h) => (
            <span key={h} className={`absolute size-1.5 border border-black bg-white ${h}`} />
          ))}
        </section>
      </div>
    </main>
  );
}

export default function App() {
  return (
    <div className="flex min-h-screen flex-col bg-white font-['Noto_Sans','Open_Sans',sans-serif]">
      <TopBar />
      <MenuBar />
      <Toolbar />
      <div className="flex flex-1">
        <DataPanel />
        <VisualsPanel />
        <Canvas />
      </div>
    </div>
  );
}
